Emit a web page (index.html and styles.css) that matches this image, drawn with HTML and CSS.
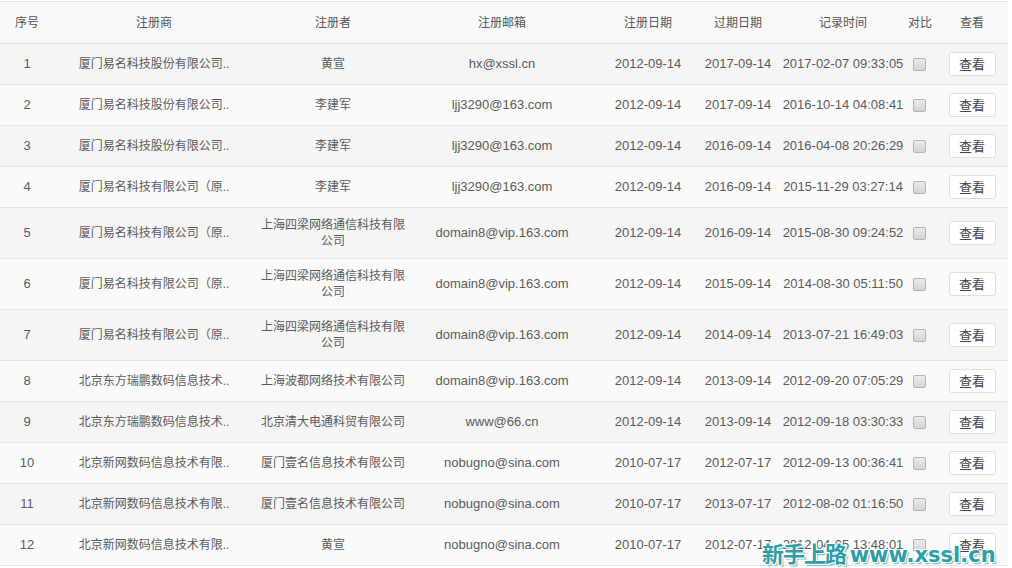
FILE: index.html
```html
<!DOCTYPE html>
<html lang="zh-CN">
<head>
<meta charset="utf-8">
<title>域名历史记录</title>
<link rel="stylesheet" href="styles.css">
</head>
<body>
<div class="page">
<table class="records">
  <colgroup>
    <col class="w-no"><col class="w-reg"><col class="w-owner"><col class="w-mail"><col class="w-date"><col class="w-exp"><col class="w-time"><col class="w-cmp"><col class="w-view">
  </colgroup>
  <thead>
    <tr>
      <th>序号</th><th>注册商</th><th>注册者</th><th>注册邮箱</th><th>注册日期</th><th>过期日期</th><th class="c-time">记录时间</th><th>对比</th><th class="c-view">查看</th>
    </tr>
  </thead>
  <tbody>
    <tr><td>1</td><td class="cn">厦门易名科技股份有限公司..</td><td class="cn owner">黄宣</td><td>hx@xssl.cn</td><td>2012-09-14</td><td>2017-09-14</td><td class="c-time">2017-02-07 09:33:05</td><td class="c-cmp"><span class="chk"></span></td><td class="c-view"><button class="btn">查看</button></td></tr>
    <tr><td>2</td><td class="cn">厦门易名科技股份有限公司..</td><td class="cn owner">李建军</td><td>ljj3290@163.com</td><td>2012-09-14</td><td>2017-09-14</td><td class="c-time">2016-10-14 04:08:41</td><td class="c-cmp"><span class="chk"></span></td><td class="c-view"><button class="btn">查看</button></td></tr>
    <tr><td>3</td><td class="cn">厦门易名科技股份有限公司..</td><td class="cn owner">李建军</td><td>ljj3290@163.com</td><td>2012-09-14</td><td>2016-09-14</td><td class="c-time">2016-04-08 20:26:29</td><td class="c-cmp"><span class="chk"></span></td><td class="c-view"><button class="btn">查看</button></td></tr>
    <tr><td>4</td><td class="cn">厦门易名科技有限公司（原..</td><td class="cn owner">李建军</td><td>ljj3290@163.com</td><td>2012-09-14</td><td>2016-09-14</td><td class="c-time">2015-11-29 03:27:14</td><td class="c-cmp"><span class="chk"></span></td><td class="c-view"><button class="btn">查看</button></td></tr>
    <tr><td>5</td><td class="cn">厦门易名科技有限公司（原..</td><td class="cn owner">上海四梁网络通信科技有限公司</td><td>domain8@vip.163.com</td><td>2012-09-14</td><td>2016-09-14</td><td class="c-time">2015-08-30 09:24:52</td><td class="c-cmp"><span class="chk"></span></td><td class="c-view"><button class="btn">查看</button></td></tr>
    <tr><td>6</td><td class="cn">厦门易名科技有限公司（原..</td><td class="cn owner">上海四梁网络通信科技有限公司</td><td>domain8@vip.163.com</td><td>2012-09-14</td><td>2015-09-14</td><td class="c-time">2014-08-30 05:11:50</td><td class="c-cmp"><span class="chk"></span></td><td class="c-view"><button class="btn">查看</button></td></tr>
    <tr><td>7</td><td class="cn">厦门易名科技有限公司（原..</td><td class="cn owner">上海四梁网络通信科技有限公司</td><td>domain8@vip.163.com</td><td>2012-09-14</td><td>2014-09-14</td><td class="c-time">2013-07-21 16:49:03</td><td class="c-cmp"><span class="chk"></span></td><td class="c-view"><button class="btn">查看</button></td></tr>
    <tr><td>8</td><td class="cn">北京东方瑞鹏数码信息技术..</td><td class="cn owner">上海波都网络技术有限公司</td><td>domain8@vip.163.com</td><td>2012-09-14</td><td>2013-09-14</td><td class="c-time">2012-09-20 07:05:29</td><td class="c-cmp"><span class="chk"></span></td><td class="c-view"><button class="btn">查看</button></td></tr>
    <tr><td>9</td><td class="cn">北京东方瑞鹏数码信息技术..</td><td class="cn owner">北京清大电通科贸有限公司</td><td>www@66.cn</td><td>2012-09-14</td><td>2013-09-14</td><td class="c-time">2012-09-18 03:30:33</td><td class="c-cmp"><span class="chk"></span></td><td class="c-view"><button class="btn">查看</button></td></tr>
    <tr><td>10</td><td class="cn">北京新网数码信息技术有限..</td><td class="cn owner">厦门壹名信息技术有限公司</td><td>nobugno@sina.com</td><td>2010-07-17</td><td>2012-07-17</td><td class="c-time">2012-09-13 00:36:41</td><td class="c-cmp"><span class="chk"></span></td><td class="c-view"><button class="btn">查看</button></td></tr>
    <tr><td>11</td><td class="cn">北京新网数码信息技术有限..</td><td class="cn owner">厦门壹名信息技术有限公司</td><td>nobugno@sina.com</td><td>2010-07-17</td><td>2013-07-17</td><td class="c-time">2012-08-02 01:16:50</td><td class="c-cmp"><span class="chk"></span></td><td class="c-view"><button class="btn">查看</button></td></tr>
    <tr><td>12</td><td class="cn">北京新网数码信息技术有限..</td><td class="cn owner">黄宣</td><td>nobugno@sina.com</td><td>2010-07-17</td><td>2012-07-17</td><td class="c-time">2012-04-05 13:48:01</td><td class="c-cmp"><span class="chk"></span></td><td class="c-view"><button class="btn">查看</button></td></tr>
  </tbody>
</table>
<div class="watermark"><span class="wm-cn">新手上路</span> <span class="wm-en">www.xssl.cn</span></div>
</div>
</body>
</html>
```

FILE: styles.css
```css
html, body {
  margin: 0;
  padding: 0;
  background: #ffffff;
}

body {
  font-family: "Liberation Sans", "Noto Sans CJK SC", sans-serif;
  font-size: 13px;
  color: #5a5a5a;
}

.page {
  position: relative;
  width: 1012px;
  height: 568px;
  overflow: hidden;
  padding-top: 1px;
  box-sizing: border-box;
}

.records {
  width: 1008px;
  table-layout: fixed;
  border-collapse: collapse;
  border-top: 1px solid #e6e6e6;
}

.w-no { width: 54px; }
.w-reg { width: 200px; }
.w-owner { width: 158px; }
.w-mail { width: 180px; }
.w-date { width: 112px; }
.w-exp { width: 68px; }
.w-time { width: 136px; }
.w-cmp { width: 22px; }
.w-view { width: 78px; }

.records th {
  height: 42px;
  box-sizing: border-box;
  padding: 0;
  font-weight: normal;
  font-size: 12px;
  color: #555555;
  background: #f9f9f9;
  border-bottom: 1px solid #dcdcdc;
  text-align: center;
  white-space: nowrap;
  line-height: 16px;
}

.records td {
  height: 41px;
  box-sizing: border-box;
  padding: 9px 0;
  text-align: center;
  line-height: 16px;
  border-bottom: 1px solid #e4e4e4;
  white-space: nowrap;
}

.records tbody tr:nth-child(odd) td { background: #f5f5f5; }
.records tbody tr:nth-child(even) td { background: #fafafa; }

.records td.cn { font-size: 12px; }
.records td.owner { white-space: normal; padding-left: 4px; padding-right: 4px; }

.records .c-time { padding-left: 6px; }
.records .c-view { padding-left: 6px; }

.chk {
  display: inline-block;
  width: 11px;
  height: 11px;
  border: 1px solid #b4b4b4;
  border-radius: 2px;
  background: linear-gradient(#ececec, #d4d4d4);
  vertical-align: middle;
}

.btn {
  width: 47px;
  height: 24px;
  margin: -4px 0;
  padding: 0;
  border: 1px solid #dedede;
  border-radius: 3px;
  background: #ffffff;
  font-family: "Noto Sans CJK SC", sans-serif;
  font-size: 13px;
  color: #444444;
  line-height: 22px;
  vertical-align: middle;
}

.watermark {
  position: absolute;
  left: 762px;
  top: 538px;
  white-space: nowrap;
  font-weight: bold;
  color: #2f9da6;
  line-height: 28px;
  text-shadow: 1px 1px 0 #ffffff, -1px -1px 0 #ffffff, 1px -1px 0 #ffffff, -1px 1px 0 #ffffff, 2px 2px 1px #6fb8bd;
}

.wm-cn {
  font-family: "Noto Sans CJK SC", sans-serif;
  font-size: 22px;
  letter-spacing: -1px;
}

.wm-en {
  font-family: "DejaVu Sans", sans-serif;
  font-size: 21px;
  letter-spacing: 0;
}
```
